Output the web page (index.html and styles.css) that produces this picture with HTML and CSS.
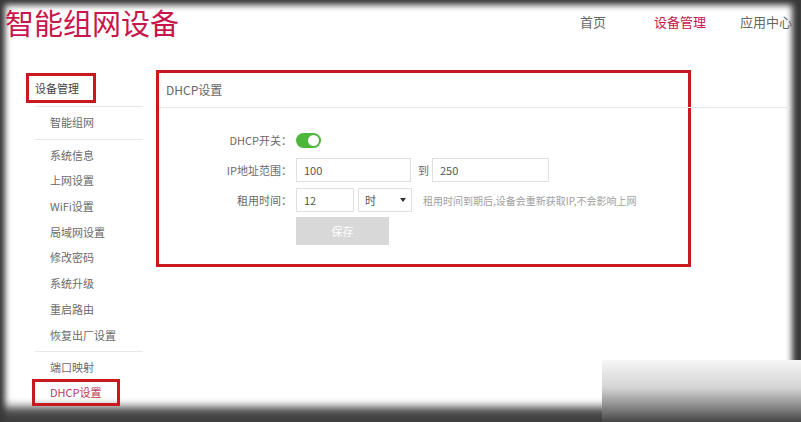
FILE: index.html
```html
<!DOCTYPE html>
<html lang="zh-CN">
<head>
    <meta charset="UTF-8">
    <meta name="viewport" content="width=device-width, initial-scale=1.0">
    <title>智能组网设备 - DHCP设置</title>
    <link rel="stylesheet" href="styles.css">
</head>
<body>
    <div class="screen">
        <header class="topbar">
            <div class="logo">智能组网设备</div>
            <nav class="nav">
                <a class="navItem home">首页</a>
                <a class="navItem active">设备管理</a>
                <a class="navItem">应用中心</a>
            </nav>
        </header>

        <div class="layout">
            <!-- left menu -->
            <aside class="sidebar">
                <div class="sideTitle">设备管理</div>
                <div class="sideLine"></div>
                <div class="sideItem">智能组网</div>
                <div class="sideLine"></div>
                <div class="sideItem">系统信息</div>
                <div class="sideItem">上网设置</div>
                <div class="sideItem">WiFi设置</div>
                <div class="sideItem">局域网设置</div>
                <div class="sideItem">修改密码</div>
                <div class="sideItem">系统升级</div>
                <div class="sideItem">重启路由</div>
                <div class="sideItem">恢复出厂设置</div>
                <div class="sideLine"></div>
                <div class="sideItem short">端口映射</div>
                <div class="sideCurrent">DHCP设置</div>
            </aside>

            <!-- DHCP form -->
            <main class="main">
                <div class="panel">
                    <div class="panelHead">DHCP设置</div>
                    <div class="form">
                        <div class="row">
                            <span class="label">DHCP开关：</span>
                            <span class="switch"><span class="knob"></span></span>
                        </div>
                        <div class="row">
                            <span class="label">IP地址范围：</span>
                            <input class="field wide" type="text" value="100">
                            <span class="to">到</span>
                            <input class="field wide2" type="text" value="250">
                        </div>
                        <div class="row row3">
                            <span class="label">租用时间：</span>
                            <input class="field small" type="text" value="12">
                            <div class="select">时<span class="arrow"></span></div>
                            <span class="hint">租用时间到期后,设备会重新获取IP,不会影响上网</span>
                        </div>
                        <div class="row">
                            <span class="label"></span>
                            <button class="saveButton">保存</button>
                        </div>
                    </div>
                </div>
            </main>
        </div>
    </div>
</body>
</html>
```

FILE: styles.css
```css
body {
    margin: 0;
    padding: 0;
    background-color: #444444;
    font-family: "Noto Sans CJK SC", "Liberation Sans", sans-serif;
}

.screen {
    position: relative;
    width: 801px;
    height: 422px;
    overflow: hidden;
    background-color: #ffffff;
    box-shadow: inset 0 8px 6px -3px #3a3a3a,
                inset 8px 0 6px -3px #3a3a3a,
                inset -13px 0 6px -4px #3a3a3a,
                inset 0 -19px 10px -4px #444444;
}

/* blurred corner at the bottom right */
.screen::after {
    content: "";
    position: absolute;
    right: 0;
    bottom: 0;
    width: 199px;
    height: 62px;
    background: linear-gradient(to bottom, #f6f6f6 0%, #d4d4d4 45%, #8a8a8a 75%, #454545 100%);
    pointer-events: none;
}

.topbar {
    display: flex;
    justify-content: space-between;
    height: 62px;
}

.logo {
    padding: 6px 0 0 5px;
    font-size: 29px;
    line-height: 32px;
    color: #c8164b;
}

.nav {
    display: flex;
    padding: 14px 9px 0 0;
}

.navItem {
    font-size: 13px;
    line-height: 16px;
    height: 16px;
    color: #666666;
}

.navItem.home {
    margin-right: 48px;
}

.navItem.active {
    color: #c8164b;
    margin-right: 34px;
}

.layout {
    display: flex;
}

.sidebar {
    width: 130px;
    margin-left: 26px;
    padding-top: 11px;
    font-size: 11px;
    color: #6a6a6a;
}

.sideTitle {
    box-sizing: border-box;
    width: 70px;
    height: 30px;
    padding-left: 6px;
    line-height: 24px;
    border: 3px solid #c9181f;
    color: #444444;
}

.sideLine {
    width: 108px;
    height: 1px;
    margin: 3px 0 3px 9px;
    background-color: #e8e8e8;
}

.sideItem {
    height: 25.7px;
    line-height: 25.7px;
    padding-left: 24px;
}

.sideItem.short {
    height: 24px;
    line-height: 24px;
    margin-top: 1px;
}

.sideCurrent {
    box-sizing: border-box;
    width: 88px;
    height: 27px;
    margin: 0 0 0 6px;
    padding-left: 15px;
    line-height: 21px;
    border: 3px solid #c9181f;
    color: #c0365c;
}

.main {
    padding-top: 8px;
}

.panel {
    box-sizing: border-box;
    width: 535px;
    height: 197px;
    border: 3px solid #c9181f;
}

.panelHead {
    height: 34px;
    line-height: 34px;
    padding-left: 7px;
    margin-right: -102px;
    font-size: 12px;
    color: #666666;
    border-bottom: 1px solid #e8e8e8;
}

.form {
    padding-top: 20px;
}

.row {
    display: flex;
    align-items: center;
    height: 24px;
    margin-bottom: 6px;
    font-size: 11px;
    color: #6a6a6a;
}

.row3 {
    margin-bottom: 7px;
}

.label {
    width: 133px;
    margin-right: 4px;
    text-align: right;
    flex-shrink: 0;
}

.switch {
    position: relative;
    width: 25px;
    height: 15px;
    border-radius: 8px;
    background-color: #4cb73a;
}

.knob {
    position: absolute;
    top: 2px;
    right: 2px;
    width: 11px;
    height: 11px;
    border-radius: 50%;
    background-color: #ffffff;
}

.field {
    box-sizing: border-box;
    height: 24px;
    padding: 0 7px;
    margin: 0;
    border: 1px solid #e0e0e0;
    font-family: inherit;
    font-size: 11px;
    color: #555555;
    outline: none;
}

.wide {
    width: 115px;
}

.wide2 {
    width: 117px;
}

.small {
    width: 58px;
}

.to {
    margin: 0 3px 0 7px;
}

.select {
    box-sizing: border-box;
    display: flex;
    align-items: center;
    justify-content: space-between;
    width: 54px;
    height: 24px;
    margin-left: 4px;
    padding: 0 5px 0 6px;
    border: 1px solid #e0e0e0;
    color: #555555;
}

.arrow {
    width: 0;
    height: 0;
    border-top: 4px solid #333333;
    border-left: 3px solid transparent;
    border-right: 3px solid transparent;
}

.hint {
    margin-left: 11px;
    font-size: 10px;
    color: #a0a0a0;
    white-space: nowrap;
}

.saveButton {
    width: 93px;
    height: 28px;
    border: none;
    background-color: #d8d8d8;
    color: #ffffff;
    font-family: inherit;
    font-size: 11px;
}
```
